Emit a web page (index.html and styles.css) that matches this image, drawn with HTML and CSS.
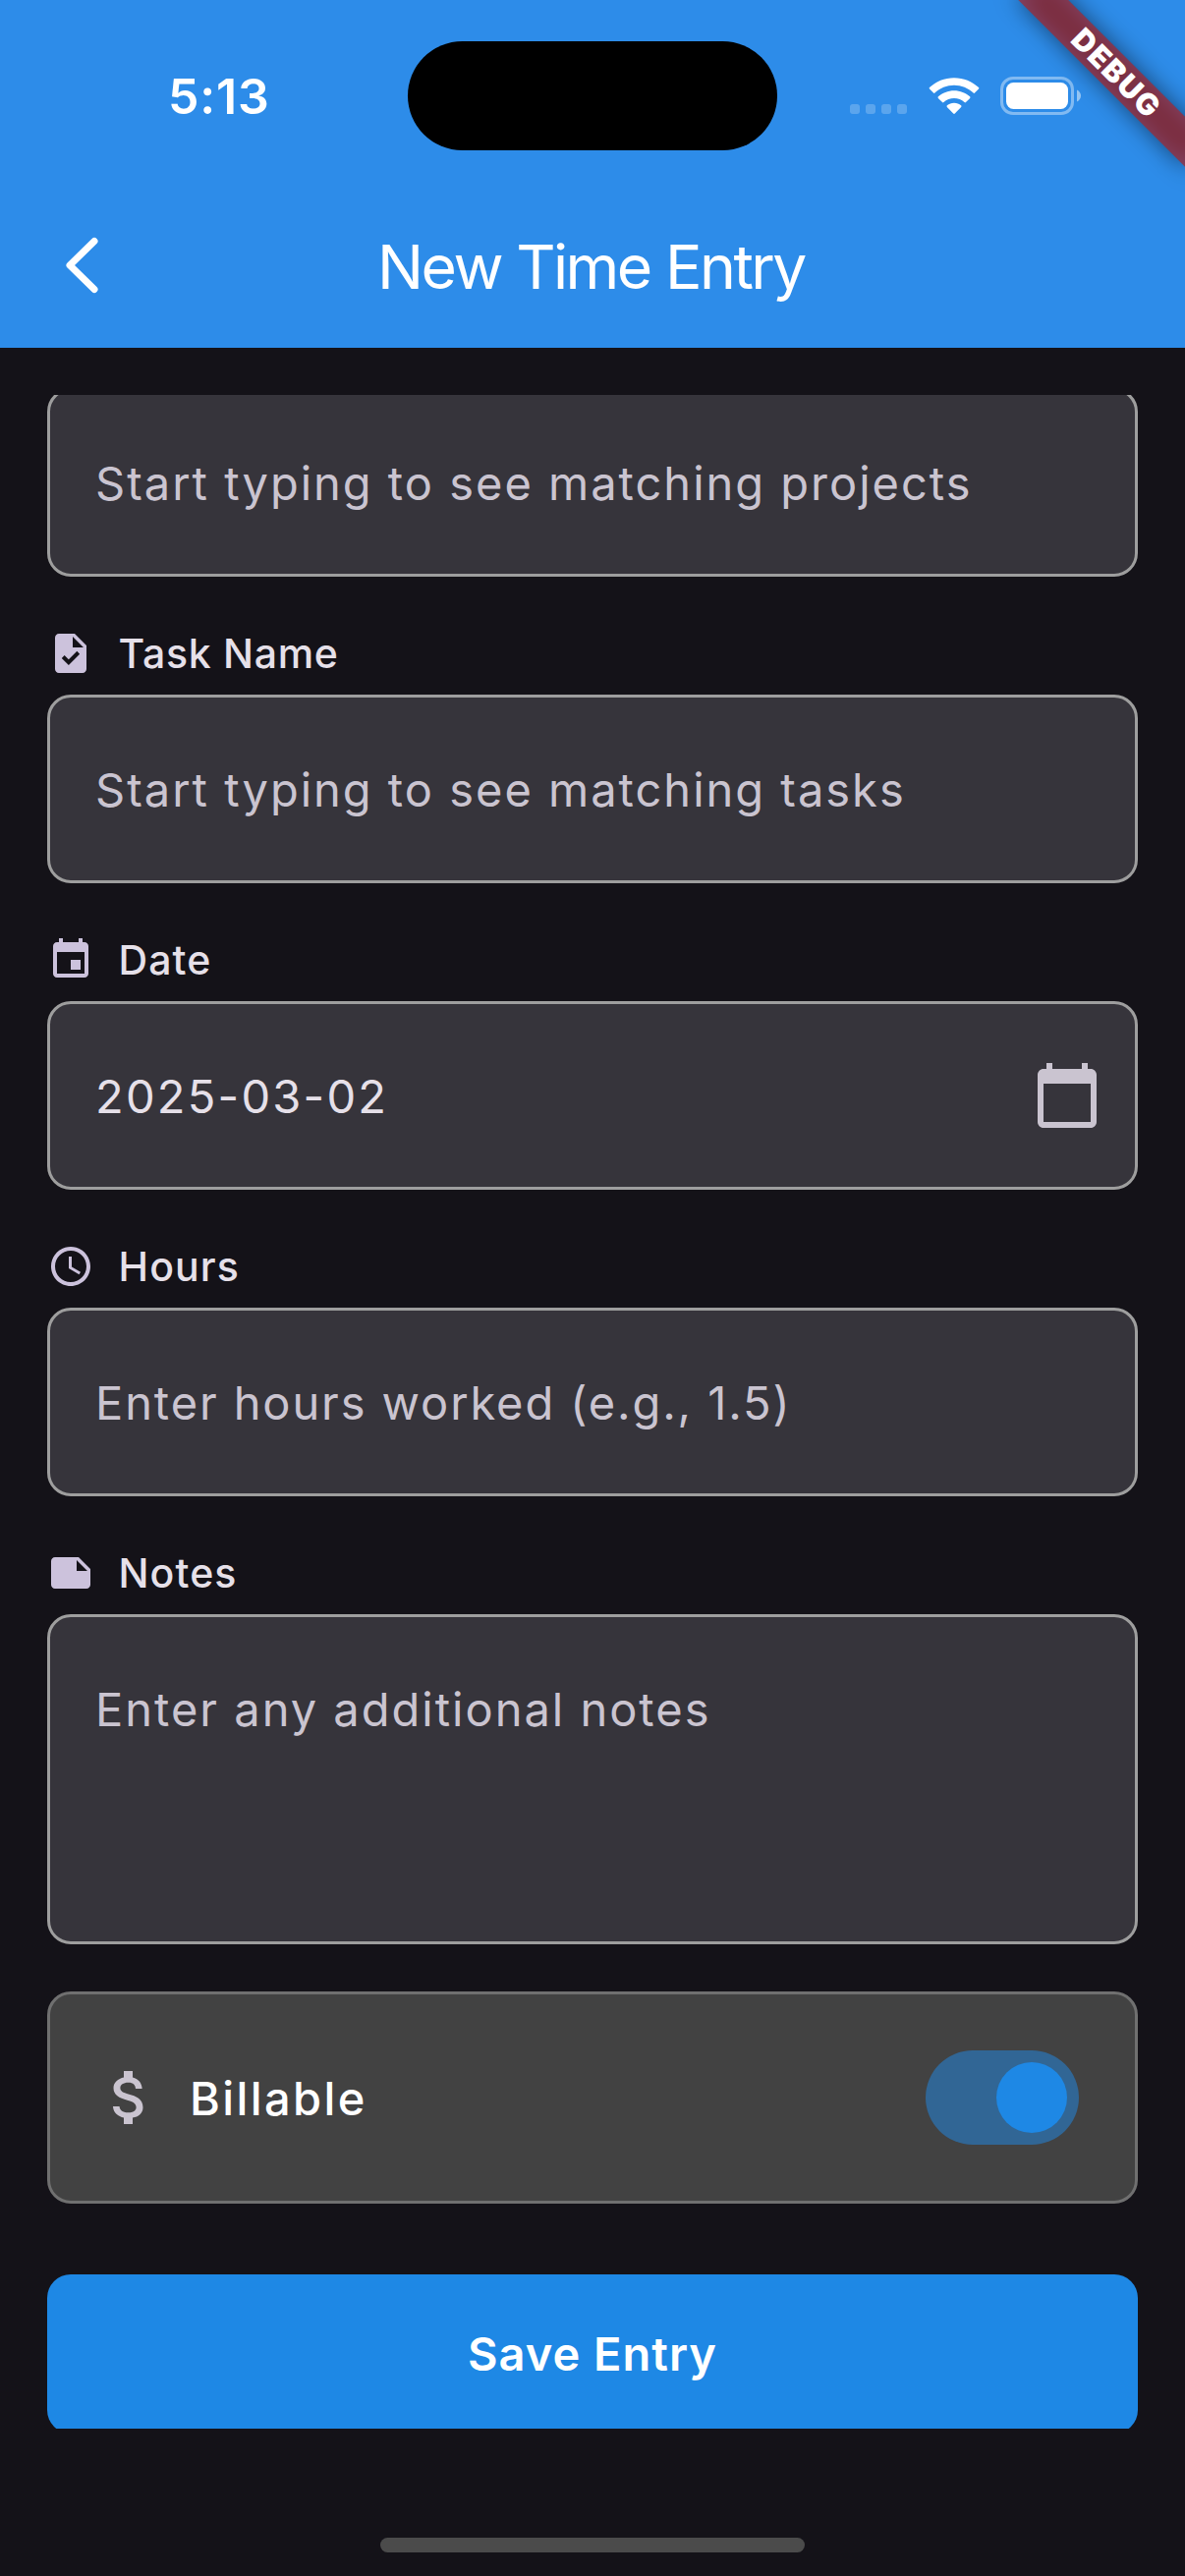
FILE: index.html
```html
<!DOCTYPE html>
<html lang="en">
<head>
<meta charset="utf-8">
<title>New Time Entry</title>
<link rel="stylesheet" href="styles.css">
</head>
<body>
<div class="screen">
  <header class="header">
    <div class="status-bar">
      <div class="clock"><span>5:13</span></div>
      <div class="island"></div>
      <div class="status-icons">
        <svg class="signal" width="58" height="10" viewBox="0 0 58 10"><rect width="10" height="10" rx="3"/><rect x="16" width="10" height="10" rx="3"/><rect x="32" width="10" height="10" rx="3"/><rect x="48" width="10" height="10" rx="3"/></svg>
        <svg class="wifi" width="52" height="38" viewBox="0 0 52 38"><path d="M26 0.2C35.6 0.2 44.4 3.9 51 10c.5.5.5 1.100 0 1.600L47 15.600c-.4.400-1 .400-1.400 0C40.300 10.700 33.500 7.800 26 7.800S11.700 10.700 6.400 15.600c-.4.400-1 .400-1.400 0L1 11.600c-.5-.5-.5-1.100 0-1.600C7.600 3.900 16.400.2 26 .2z"/><path d="M26 13.200c6.200 0 11.800 2.300 16.100 6.100.5.5.5 1.100.1 1.600l-4.200 4.200c-.4.400-1 .400-1.500 0C33.700 22.500 30 21 26 21s-7.700 1.500-10.500 4.100c-.5.400-1.100.4-1.500 0l-4.200-4.200c-.4-.5-.4-1.100.1-1.600C14.200 15.500 19.800 13.200 26 13.200z"/><path d="M26 25.800c2.700 0 5.200.9 7.100 2.500.5.500.5 1.100.1 1.600l-6.400 6.600c-.5.500-1.100.5-1.600 0l-6.400-6.600c-.4-.5-.4-1.100.1-1.600 1.900-1.600 4.400-2.500 7.100-2.500z"/></svg>
        <svg class="battery" width="82" height="39" viewBox="0 0 82 39"><rect class="shell" x="1.500" y="1.500" width="72" height="36" rx="11.500"/><rect x="6" y="6" width="63" height="27" rx="7.500"/><path class="nub" d="M78 13.500c2.400 1 4 3.400 4 6s-1.600 5-4 6z"/></svg>
      </div>
    </div>
    <div class="app-bar">
      <svg class="back" width="34" height="58" viewBox="0 0 34 58"><path d="M29 4.500 4 29 29 53.500"/></svg>
      <h1 class="title">New Time Entry</h1>
    </div>
    <div class="banner"><div class="banner-shadow"></div><div class="banner-strip"><span>DEBUG</span></div></div>
  </header>

  <main class="viewport">
    <div class="form">
      <section class="group">
        <div class="field"><span class="hint">Start typing to see matching projects</span></div>
      </section>
      <section class="group">
        <div class="label label-long"><svg class="icon" viewBox="0 0 24 24"><path d="M14 2H6c-1.100 0-1.990.9-1.990 2L4 20c0 1.100.89 2 1.990 2H18c1.100 0 2-.9 2-2V8l-6-6zm-3.060 16L7.400 14.460l1.410-1.410 2.120 2.120 4.240-4.240 1.410 1.410L10.940 18zM13 9V3.500L18.500 9H13z"/></svg><span>Task Name</span></div>
        <div class="field"><span class="hint">Start typing to see matching tasks</span></div>
      </section>
      <section class="group">
        <div class="label"><svg class="icon" viewBox="0 0 24 24"><path d="M17 12h-5v5h5v-5zM16 1v2H8V1H6v2H5c-1.110 0-1.990.9-1.990 2L3 19c0 1.100.89 2 2 2h14c1.100 0 2-.9 2-2V5c0-1.100-.9-2-2-2h-1V1h-2zm3 18H5V8h14v11z"/></svg><span>Date</span></div>
        <div class="field"><span class="value">2025-03-02</span><svg class="icon-large" viewBox="0 0 24 24"><path d="M20 3h-1V1h-2v2H7V1H5v2H4c-1.100 0-2 .9-2 2v16c0 1.100.9 2 2 2h16c1.100 0 2-.9 2-2V5c0-1.100-.9-2-2-2zm0 18H4V8h16v13z"/></svg></div>
      </section>
      <section class="group">
        <div class="label"><svg class="icon" viewBox="0 0 24 24"><path d="M11.990 2C6.470 2 2 6.480 2 12s4.470 10 9.990 10C17.520 22 22 17.520 22 12S17.520 2 11.990 2zM12 20c-4.420 0-8-3.580-8-8s3.580-8 8-8 8 3.580 8 8-3.580 8-8 8zm.5-13H11v6l5.250 3.150.75-1.230-4.500-2.670z"/></svg><span>Hours</span></div>
        <div class="field"><span class="hint hint-hours">Enter hours worked (e.g., 1.5)</span></div>
      </section>
      <section class="group group-notes">
        <div class="label"><svg class="icon" viewBox="0 0 24 24"><path d="M22 10l-6-6H4c-1.100 0-2 .9-2 2v12.010c0 1.100.9 1.990 2 1.990l16-.010c1.100 0 2-.89 2-1.990v-8zm-7-4.500l5.500 5.500H15V5.500z"/></svg><span>Notes</span></div>
        <div class="field field-notes"><span class="hint">Enter any additional notes</span></div>
      </section>
      <section class="billable">
        <svg class="icon-large" viewBox="0 0 24 24"><path d="M11.800 10.900c-2.270-.590-3-1.200-3-2.150 0-1.090 1.010-1.850 2.700-1.850 1.780 0 2.440.850 2.500 2.100h2.210c-.070-1.720-1.120-3.300-3.210-3.810V3h-3v2.160c-1.940.420-3.500 1.680-3.500 3.610 0 2.310 1.910 3.460 4.700 4.130 2.500.600 3 1.480 3 2.410 0 .690-.490 1.790-2.700 1.790-2.060 0-2.870-.920-2.980-2.100h-2.200c.120 2.190 1.760 3.420 3.680 3.830V21h3v-2.150c1.950-.370 3.500-1.500 3.500-3.550 0-2.840-2.430-3.810-4.700-4.400z"/></svg>
        <span class="billable-text">Billable</span>
        <div class="switch"><div class="thumb"></div></div>
      </section>
      <button class="save"><span>Save Entry</span></button>
    </div>
  </main>
  <div class="home-indicator"></div>
</div>
</body>
</html>
```
FILE: styles.css
```css
* { box-sizing: border-box; }
body { margin: 0; background: #141218; font-family: Inter, "Liberation Sans", sans-serif; }
svg { display: block; flex: none; fill: currentColor; }
.screen { width: 1206px; height: 2622px; overflow: hidden; background: #141218; display: flex; flex-direction: column; align-items: center; }

.header { position: relative; flex: none; width: 1206px; height: 354px; background: #2d8ce9; color: #fff; overflow: hidden; }
.status-bar { height: 186px; padding: 41.5px 106px 0 171px; display: flex; align-items: flex-start; }
.clock { width: 244px; height: 111px; padding-top: 2px; display: flex; align-items: center; font-size: 50px; line-height: 60px; font-weight: 600; letter-spacing: .8px; }
.island { width: 376px; height: 111px; border-radius: 56px; background: #000; }
.status-icons { display: flex; align-items: flex-start; padding: 36.5px 0 0 74px; }
.signal { margin-top: 28px; opacity: .22; }
.wifi { margin: 1px 0 0 22px; }
.battery { margin-left: 21px; }
.shell { fill: none; stroke: #fff; stroke-width: 3; opacity: .4; }
.nub { opacity: .5; }

.app-bar { height: 168px; display: grid; grid-template-columns: 140px 1fr 140px; align-items: center; }
.back { margin-left: 67px; fill: none; stroke: #fff; stroke-width: 7; stroke-linecap: round; stroke-linejoin: round; }
.title { margin: 0; padding: 2px 3px 0 0; text-align: center; white-space: nowrap; font-size: 62.5px; line-height: 80px; font-weight: 400; letter-spacing: -2.5px; }

/* Diagonal ribbon laid over the top right corner */
.banner { position: absolute; top: 0; right: 0; width: 0; height: 0; transform: rotate(45deg); }
.banner-shadow, .banner-strip { position: absolute; left: -120px; top: 84px; width: 240px; height: 36px; }
.banner-shadow { background: rgba(0,0,0,.5); filter: blur(12px); }
.banner-strip { padding-left: 7px; background: rgba(183,28,28,.627); display: flex; align-items: center; justify-content: center; font-size: 30.5px; line-height: 36px; font-weight: 900; letter-spacing: 1.6px; }

.viewport { flex: none; width: 1110px; height: 2070px; margin-top: 48px; overflow: hidden; }
.form { margin-top: -7px; }
.group { margin-bottom: 54px; }
.group-notes { margin-bottom: 48px; }
.label { height: 48px; margin-bottom: 18px; display: flex; align-items: center; gap: 24.5px; color: #e6e0e9; font-size: 41px; line-height: 48px; font-weight: 500; letter-spacing: 1.1px; }
.label-long { letter-spacing: .7px; }
.icon { width: 48px; height: 48px; color: #ccc2dc; }
.icon-large { width: 72px; height: 72px; color: #cac4d0; }
.field { height: 192px; padding: 0 33px 0 46px; display: flex; align-items: center; justify-content: space-between; background: #36343b; border: 3px solid #9e9e9e; border-radius: 24px; font-size: 47px; line-height: 72px; white-space: nowrap; letter-spacing: 2px; }
.hint, .value { padding-top: 2px; }
.hint { color: #cac4d0; }
.hint-hours { letter-spacing: 1.9px; }
.value { color: #e6e0e9; letter-spacing: 2.25px; }
.field-notes { height: 336px; align-items: flex-start; padding-top: 56px; }
.billable { height: 216px; padding: 0 57px 0 45px; display: flex; align-items: center; background: #424242; border: 3px solid #707070; border-radius: 24px; }
.billable-text { margin-left: 25px; padding-top: 2px; color: #fff; font-size: 47px; line-height: 72px; font-weight: 500; letter-spacing: 2.4px; }
.switch { width: 156px; height: 96px; margin-left: auto; padding: 12px; border-radius: 48px; background: #316695; display: flex; justify-content: flex-end; }
.thumb { width: 72px; height: 72px; border-radius: 36px; background: #1e88e5; }
.save { display: block; width: 100%; height: 162px; margin-top: 72px; padding: 0; border: 0; border-radius: 24px; background: #1e88e5; color: #fff; font: 600 47px/72px Inter, sans-serif; letter-spacing: 1px; }
.home-indicator { width: 432px; height: 15px; margin-top: 111px; border-radius: 8px; background: #4b4b4b; }
```
